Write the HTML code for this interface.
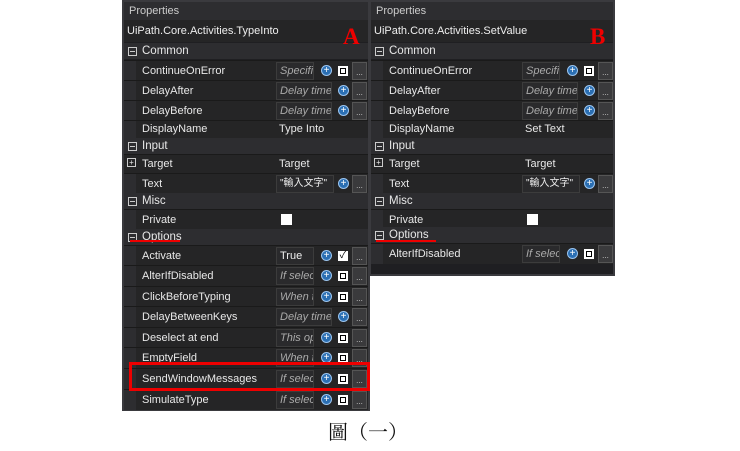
<!DOCTYPE html><html><head><meta charset="utf-8"><style>
body{margin:0;width:740px;height:451px;background:#fff;position:relative;overflow:hidden;font-family:"Liberation Sans","Noto Sans CJK TC",sans-serif;}
.p{position:absolute;top:0;background:#1f1f22;border:2px solid #3a3a3e;box-sizing:border-box;color:#e8e8e8;font-size:11px}
.tb{position:absolute;left:0;right:0;top:0;height:18px;background:#2d2d30;color:#ccc;padding-left:5px;line-height:18px}
.tn{position:absolute;left:0;right:0;top:18px;height:22px;background:#252526;line-height:22px;padding-left:3px;color:#eee}
.c{position:absolute;left:0;right:0;height:16px;background:#2d2d30;line-height:16px;font-size:11.5px;padding-left:18px}
.c:before{content:"";position:absolute;left:4px;top:4px;width:7px;height:7px;border:1px solid #ccc}
.c:after{content:"";position:absolute;left:6px;top:8px;width:5px;height:1px;background:#ccc}
.r{position:absolute;left:0;right:0;height:20px;background:#252526;border-top:1px solid #1a1a1a}
.r .ind{position:absolute;left:0;top:0;width:12px;height:20px;background:#2d2d30}
.r .n{position:absolute;left:18px;top:4px}
.v{position:absolute;top:1px;height:18px;width:38px;background:#2a2a2c;border:1px solid #3c3c3c;box-sizing:border-box;font-style:italic;color:#aaa;line-height:16px;padding-left:3px;overflow:hidden;white-space:nowrap}
.v.s{font-style:normal;color:#eee}
.pl{position:absolute;top:4px;width:11px;height:11px;border-radius:50%;background:#2b6fb3;border:1px solid #9cc5ef;box-sizing:border-box;color:#fff;font-size:10px;line-height:9px;text-align:center}
.cb{position:absolute;top:5px;width:10px;height:10px;background:#fff;box-sizing:border-box;border:2px solid #fff;outline:1px solid #000;outline-offset:-3px}
.d{position:absolute;top:1px;width:15px;height:18px;background:#3a3a3c;border:1px solid #555;box-sizing:border-box;color:#ccc;font-size:8px;line-height:20px;text-align:center}
.lt{position:absolute;top:24px;color:#e00;font:bold 23px "Liberation Serif",serif}
</style></head><body>

<div class="p" style="left:122px;width:248px;height:411px">
<div class="tb">Properties</div>
<div class="tn">UiPath.Core.Activities.TypeInto</div>
<div class="c" style="top:41px">Common</div>
<div class="r" style="top:58px"><div class="ind"></div><span class="n">ContinueOnError</span><div class="v" style="left:152px">Specific</div><div class="pl" style="left:197px">+</div><div class="cb" style="left:214px"></div><div class="d" style="left:228px">...</div></div>
<div class="r" style="top:78px"><div class="ind"></div><span class="n">DelayAfter</span><div class="v" style="left:152px;width:56px">Delay time</div><div class="pl" style="left:214px">+</div><div class="d" style="left:228px">...</div></div>
<div class="r" style="top:98px"><div class="ind"></div><span class="n">DelayBefore</span><div class="v" style="left:152px;width:56px">Delay time</div><div class="pl" style="left:214px">+</div><div class="d" style="left:228px">...</div></div>
<div class="r" style="top:118px;height:17px"><div class="ind"></div><span class="n" style="top:2px">DisplayName</span><span style="position:absolute;left:155px;top:2px">Type Into</span></div>
<div class="c" style="top:136px">Input</div>
<div class="r" style="top:152px;height:18px;"><span class="n" style="left:18px;top:3px">Target</span><span style="position:absolute;left:3px;top:3px;width:7px;height:7px;border:1px solid #ccc;font-size:8px;line-height:7px;text-align:center">+</span><span style="position:absolute;left:155px;top:3px">Target</span></div>
<div class="r" style="top:171px"><div class="ind"></div><span class="n">Text</span><div class="v s" style="left:152px;width:58px;font-size:10px">"輸入文字"</div><div class="pl" style="left:214px">+</div><div class="d" style="left:228px">...</div></div>
<div class="c" style="top:191px">Misc</div>
<div class="r" style="top:207px"><div class="ind"></div><span class="n">Private</span><div style="position:absolute;left:157px;top:4px;width:11px;height:11px;background:#fff"></div></div>
<div class="c" style="top:227px">Options</div>
<div class="r" style="top:243px"><div class="ind"></div><span class="n">Activate</span><div class="v s" style="left:152px">True</div><div class="pl" style="left:197px">+</div><div style="position:absolute;left:214px;top:5px;width:10px;height:10px;background:#fff;color:#000;font-size:10px;line-height:10px;text-align:center">✓</div><div class="d" style="left:228px">...</div></div>
<div class="r" style="top:263px"><div class="ind"></div><span class="n">AlterIfDisabled</span><div class="v" style="left:152px">If selec</div><div class="pl" style="left:197px">+</div><div class="cb" style="left:214px"></div><div class="d" style="left:228px">...</div></div>
<div class="r" style="top:284px"><div class="ind"></div><span class="n">ClickBeforeTyping</span><div class="v" style="left:152px">When t</div><div class="pl" style="left:197px">+</div><div class="cb" style="left:214px"></div><div class="d" style="left:228px">...</div></div>
<div class="r" style="top:304px"><div class="ind"></div><span class="n">DelayBetweenKeys</span><div class="v" style="left:152px;width:56px">Delay time</div><div class="pl" style="left:214px">+</div><div class="d" style="left:228px">...</div></div>
<div class="r" style="top:325px"><div class="ind"></div><span class="n">Deselect at end</span><div class="v" style="left:152px">This op</div><div class="pl" style="left:197px">+</div><div class="cb" style="left:214px"></div><div class="d" style="left:228px">...</div></div>
<div class="r" style="top:345px"><div class="ind"></div><span class="n">EmptyField</span><div class="v" style="left:152px">When t</div><div class="pl" style="left:197px">+</div><div class="cb" style="left:214px"></div><div class="d" style="left:228px">...</div></div>
<div class="r" style="top:366px"><div class="ind"></div><span class="n">SendWindowMessages</span><div class="v" style="left:152px">If selec</div><div class="pl" style="left:197px">+</div><div class="cb" style="left:214px"></div><div class="d" style="left:228px">...</div></div>
<div class="r" style="top:387px"><div class="ind"></div><span class="n">SimulateType</span><div class="v" style="left:152px">If selec</div><div class="pl" style="left:197px">+</div><div class="cb" style="left:214px"></div><div class="d" style="left:228px">...</div></div>
</div>

<div class="p" style="left:369px;width:246px;height:276px">
<div class="tb">Properties</div>
<div class="tn">UiPath.Core.Activities.SetValue</div>
<div class="c" style="top:41px">Common</div>
<div class="r" style="top:58px"><div class="ind"></div><span class="n">ContinueOnError</span><div class="v" style="left:151px">Specific</div><div class="pl" style="left:196px">+</div><div class="cb" style="left:213px"></div><div class="d" style="left:227px">...</div></div>
<div class="r" style="top:78px"><div class="ind"></div><span class="n">DelayAfter</span><div class="v" style="left:151px;width:56px">Delay time</div><div class="pl" style="left:213px">+</div><div class="d" style="left:227px">...</div></div>
<div class="r" style="top:98px"><div class="ind"></div><span class="n">DelayBefore</span><div class="v" style="left:151px;width:56px">Delay time</div><div class="pl" style="left:213px">+</div><div class="d" style="left:227px">...</div></div>
<div class="r" style="top:118px;height:17px"><div class="ind"></div><span class="n" style="top:2px">DisplayName</span><span style="position:absolute;left:154px;top:2px">Set Text</span></div>
<div class="c" style="top:136px">Input</div>
<div class="r" style="top:152px;height:18px;"><span class="n" style="top:3px">Target</span><span style="position:absolute;left:3px;top:3px;width:7px;height:7px;border:1px solid #ccc;font-size:8px;line-height:7px;text-align:center">+</span><span style="position:absolute;left:154px;top:3px">Target</span></div>
<div class="r" style="top:171px"><div class="ind"></div><span class="n">Text</span><div class="v s" style="left:151px;width:58px;font-size:10px">"輸入文字"</div><div class="pl" style="left:213px">+</div><div class="d" style="left:227px">...</div></div>
<div class="c" style="top:191px">Misc</div>
<div class="r" style="top:207px"><div class="ind"></div><span class="n">Private</span><div style="position:absolute;left:156px;top:4px;width:11px;height:11px;background:#fff"></div></div>
<div class="c" style="top:225px">Options</div>
<div class="r" style="top:241px"><div class="ind"></div><span class="n">AlterIfDisabled</span><div class="v" style="left:151px">If selec</div><div class="pl" style="left:196px">+</div><div class="cb" style="left:213px"></div><div class="d" style="left:227px">...</div></div>
</div>

<div class="lt" style="left:343px">A</div>
<div class="lt" style="left:590px">B</div>
<div style="position:absolute;left:130px;top:240px;width:50px;height:2px;background:#e00"></div>
<div style="position:absolute;left:376px;top:240px;width:60px;height:2px;background:#e00"></div>
<div style="position:absolute;left:129px;top:362px;width:241px;height:29px;border:3px solid #e00;box-sizing:border-box"></div>
<div style="position:absolute;left:328px;top:416px;font:20px 'Noto Serif CJK SC',serif;color:#111">圖（一）</div>
</body></html>
